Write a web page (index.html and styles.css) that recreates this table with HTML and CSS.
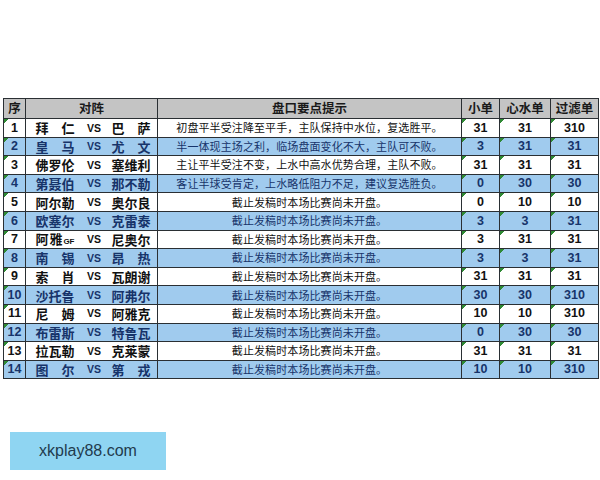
FILE: index.html
```html
<!DOCTYPE html>
<html lang="zh-CN">
<head>
<meta charset="utf-8">
<title>盘口要点提示</title>
<link rel="stylesheet" href="styles.css">
</head>
<body>
<table class="sheet">
  <colgroup>
    <col class="c-no"><col class="c-match"><col class="c-tip"><col class="c-a"><col class="c-b"><col class="c-c">
  </colgroup>
  <thead>
    <tr class="head">
      <th>序</th><th>对阵</th><th>盘口要点提示</th><th>小单</th><th>心水单</th><th>过滤单</th>
    </tr>
  </thead>
  <tbody>
    <tr><td class="no">1</td><td class="match"><div class="vs-row"><span class="team"><span class="dist">拜仁</span></span><span class="vs">VS</span><span class="team"><span class="dist">巴萨</span></span></div></td><td class="tip">初盘平半受注降至平手，主队保持中水位，复选胜平。</td><td class="num">31</td><td class="num">31</td><td class="num">310</td></tr>
    <tr class="blue"><td class="no">2</td><td class="match"><div class="vs-row"><span class="team"><span class="dist">皇马</span></span><span class="vs">VS</span><span class="team"><span class="dist">尤文</span></span></div></td><td class="tip">半一体现主场之利，临场盘面变化不大，主队可不败。</td><td class="num">3</td><td class="num">31</td><td class="num">31</td></tr>
    <tr><td class="no">3</td><td class="match"><div class="vs-row"><span class="team"><span class="dist">佛罗伦</span></span><span class="vs">VS</span><span class="team"><span class="dist">塞维利</span></span></div></td><td class="tip">主让平半受注不变，上水中高水优势合理，主队不败。</td><td class="num">31</td><td class="num">31</td><td class="num">31</td></tr>
    <tr class="blue"><td class="no">4</td><td class="match"><div class="vs-row"><span class="team"><span class="dist">第聂伯</span></span><span class="vs">VS</span><span class="team"><span class="dist">那不勒</span></span></div></td><td class="tip">客让半球受肯定，上水略低阻力不足，建议复选胜负。</td><td class="num">0</td><td class="num">30</td><td class="num">30</td></tr>
    <tr><td class="no">5</td><td class="match"><div class="vs-row"><span class="team"><span class="dist">阿尔勒</span></span><span class="vs">VS</span><span class="team"><span class="dist">奥尔良</span></span></div></td><td class="tip">截止发稿时本场比赛尚未开盘。</td><td class="num">0</td><td class="num">10</td><td class="num">10</td></tr>
    <tr class="blue"><td class="no">6</td><td class="match"><div class="vs-row"><span class="team"><span class="dist">欧塞尔</span></span><span class="vs">VS</span><span class="team"><span class="dist">克雷泰</span></span></div></td><td class="tip">截止发稿时本场比赛尚未开盘。</td><td class="num">3</td><td class="num">3</td><td class="num">31</td></tr>
    <tr><td class="no">7</td><td class="match"><div class="vs-row"><span class="team"><span class="dist">阿雅<small>GF</small></span></span><span class="vs">VS</span><span class="team"><span class="dist">尼奥尔</span></span></div></td><td class="tip">截止发稿时本场比赛尚未开盘。</td><td class="num">3</td><td class="num">31</td><td class="num">31</td></tr>
    <tr class="blue"><td class="no">8</td><td class="match"><div class="vs-row"><span class="team"><span class="dist">南锡</span></span><span class="vs">VS</span><span class="team"><span class="dist">昂热</span></span></div></td><td class="tip">截止发稿时本场比赛尚未开盘。</td><td class="num">3</td><td class="num">3</td><td class="num">31</td></tr>
    <tr><td class="no">9</td><td class="match"><div class="vs-row"><span class="team"><span class="dist">索肖</span></span><span class="vs">VS</span><span class="team"><span class="dist">瓦朗谢</span></span></div></td><td class="tip">截止发稿时本场比赛尚未开盘。</td><td class="num">31</td><td class="num">31</td><td class="num">31</td></tr>
    <tr class="blue"><td class="no">10</td><td class="match"><div class="vs-row"><span class="team"><span class="dist">沙托鲁</span></span><span class="vs">VS</span><span class="team"><span class="dist">阿弗尔</span></span></div></td><td class="tip">截止发稿时本场比赛尚未开盘。</td><td class="num">30</td><td class="num">30</td><td class="num">310</td></tr>
    <tr><td class="no">11</td><td class="match"><div class="vs-row"><span class="team"><span class="dist">尼姆</span></span><span class="vs">VS</span><span class="team"><span class="dist">阿雅克</span></span></div></td><td class="tip">截止发稿时本场比赛尚未开盘。</td><td class="num">10</td><td class="num">10</td><td class="num">310</td></tr>
    <tr class="blue"><td class="no">12</td><td class="match"><div class="vs-row"><span class="team"><span class="dist">布雷斯</span></span><span class="vs">VS</span><span class="team"><span class="dist">特鲁瓦</span></span></div></td><td class="tip">截止发稿时本场比赛尚未开盘。</td><td class="num">0</td><td class="num">30</td><td class="num">30</td></tr>
    <tr><td class="no">13</td><td class="match"><div class="vs-row"><span class="team"><span class="dist">拉瓦勒</span></span><span class="vs">VS</span><span class="team"><span class="dist">克莱蒙</span></span></div></td><td class="tip">截止发稿时本场比赛尚未开盘。</td><td class="num">31</td><td class="num">31</td><td class="num">31</td></tr>
    <tr class="blue"><td class="no">14</td><td class="match"><div class="vs-row"><span class="team"><span class="dist">图尔</span></span><span class="vs">VS</span><span class="team"><span class="dist">第戎</span></span></div></td><td class="tip">截止发稿时本场比赛尚未开盘。</td><td class="num">10</td><td class="num">10</td><td class="num">310</td></tr>
  </tbody>
</table>
<div class="stamp">xkplay88.com</div>
</body>
</html>
```

FILE: styles.css
```css
html, body {
  margin: 0;
  padding: 0;
  background: #ffffff;
}

body {
  font-family: "Noto Sans CJK SC", "Liberation Sans", sans-serif;
  color: #111111;
}

.sheet {
  margin: 98px 0 0 3px;
  border-collapse: collapse;
  table-layout: fixed;
  width: 595px;
}

.c-no { width: 22px; }
.c-match { width: 132px; }
.c-tip { width: 304px; }
.c-a { width: 38px; }
.c-b { width: 51px; }
.c-c { width: 48px; }

.sheet th,
.sheet td {
  border: 1px solid #2a2f33;
  padding: 0;
  text-align: center;
  vertical-align: middle;
  overflow: hidden;
  white-space: nowrap;
}

.head th {
  height: 19px;
  background: #c4c4c4;
  font-size: 12.5px;
  font-weight: 700;
  line-height: 1;
  color: #1a1a1a;
}

.sheet tbody tr {
  height: 18.6px;
}

.sheet tbody td {
  line-height: 1;
}

.blue td {
  background-color: #a0cbee;
  color: #17346a;
}

.no,
.num {
  font-family: "Liberation Sans", "DejaVu Sans", sans-serif;
  font-weight: 700;
  font-size: 12.5px;
  background-image: linear-gradient(135deg, #2f8a34 0, #2f8a34 3px, transparent 3px);
  background-size: 5px 5px;
  background-repeat: no-repeat;
  background-position: 0 0;
}

.vs-row {
  display: grid;
  grid-template-columns: 58px 20px 54px;
  align-items: center;
}

.team {
  display: flex;
  justify-content: center;
  font-size: 13px;
  font-weight: 700;
}

.dist {
  display: inline-block;
  width: 39px;
  text-align: justify;
  text-align-last: justify;
}

.dist small {
  font-family: "Liberation Sans", sans-serif;
  font-size: 8px;
  font-weight: 700;
}

.vs {
  font-family: "Liberation Sans", sans-serif;
  font-size: 10.5px;
  font-weight: 700;
  text-align: center;
}

.tip {
  font-size: 11px;
  letter-spacing: 0.1px;
  font-weight: 400;
}

.stamp {
  margin: 53px 0 0 10px;
  width: 156px;
  height: 38px;
  background: #8fd5f2;
  color: #1f3b4d;
  font-family: "Liberation Sans", "Noto Sans", sans-serif;
  font-size: 16px;
  display: flex;
  align-items: center;
  justify-content: center;
}
```
